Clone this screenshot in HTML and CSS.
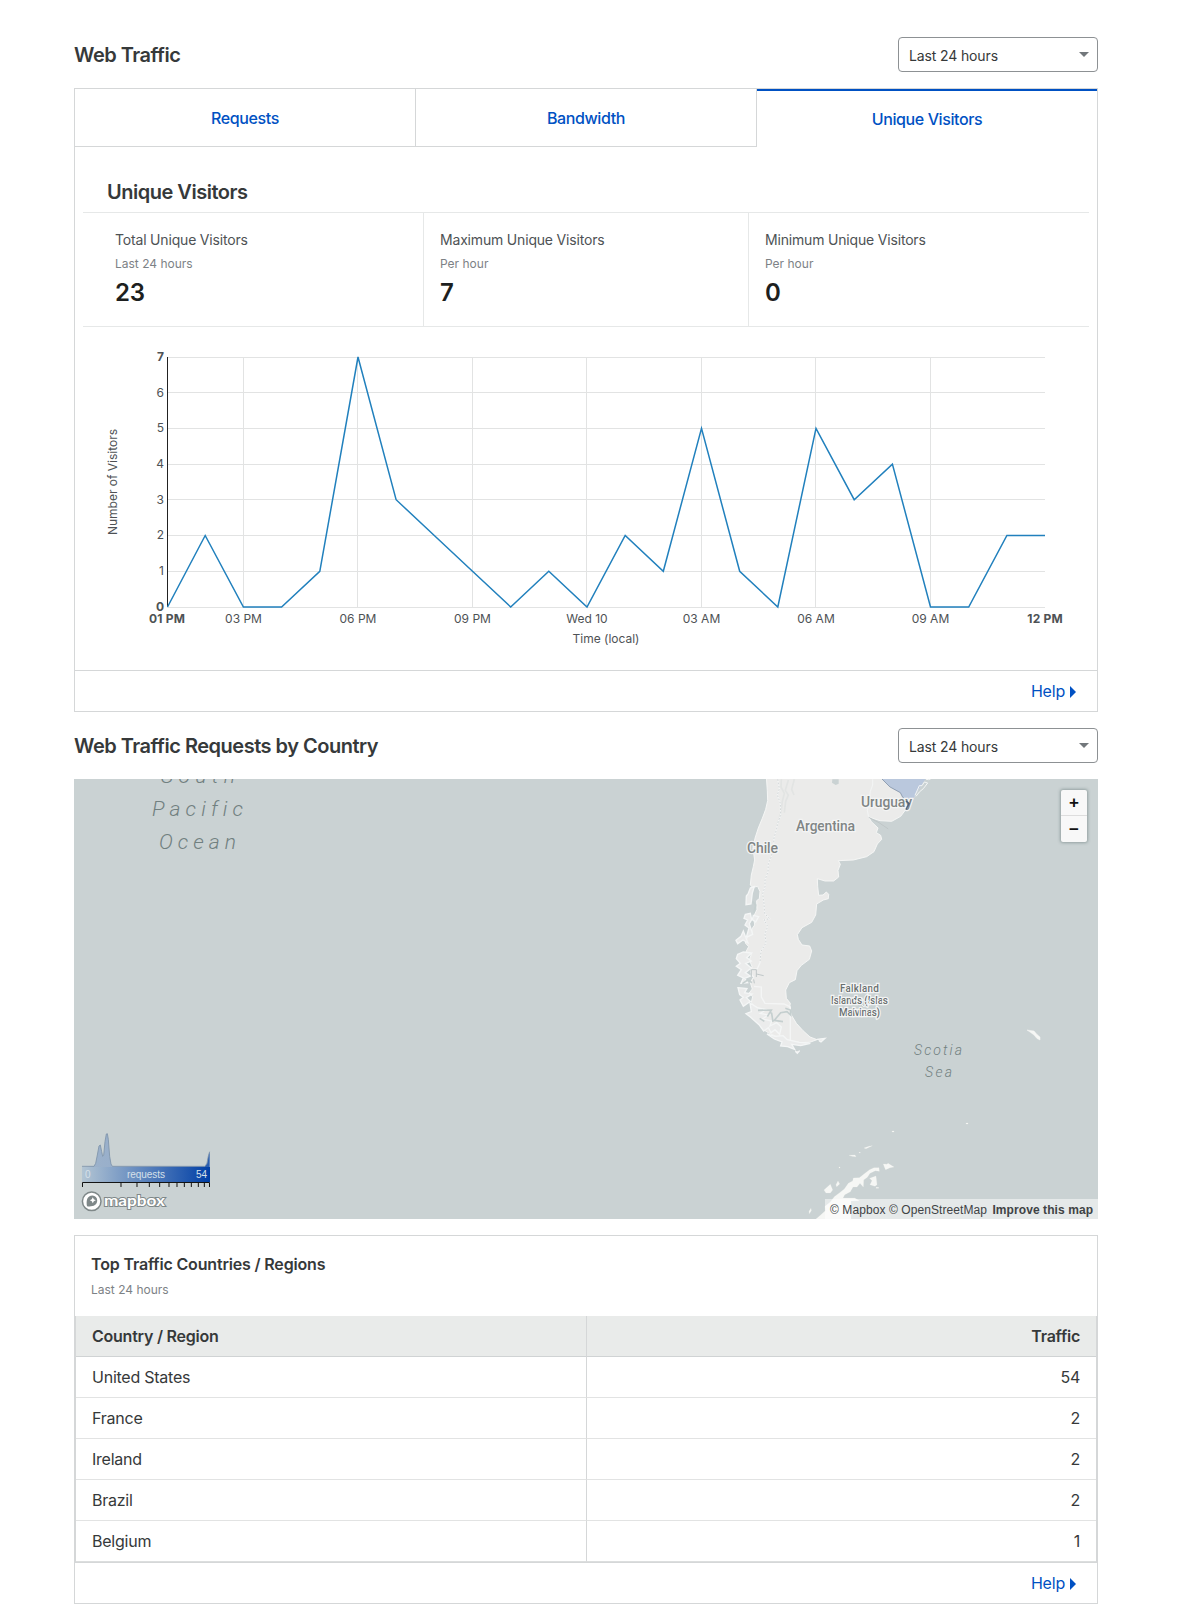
FILE: index.html
```html
<!DOCTYPE html>
<html lang="en">
<head>
<meta charset="utf-8">
<title>Web Traffic</title>
<link rel="stylesheet" href="styles.css">
</head>
<body>
<main class="page">
  <header class="section-head">
    <h2 class="section-title">Web Traffic</h2>
    <div class="select"><span>Last 24 hours</span><i class="caret"></i></div>
  </header>

  <section class="card">
    <nav class="tabs">
      <a class="tab">Requests</a>
      <a class="tab">Bandwidth</a>
      <a class="tab tab-active">Unique Visitors</a>
    </nav>
    <div class="panel">
      <h3 class="panel-title">Unique Visitors</h3>
      <div class="stats">
        <div class="stat"><div class="stat-label">Total Unique Visitors</div><div class="stat-sub">Last 24 hours</div><div class="stat-value">23</div></div>
        <div class="stat"><div class="stat-label">Maximum Unique Visitors</div><div class="stat-sub">Per hour</div><div class="stat-value">7</div></div>
        <div class="stat"><div class="stat-label">Minimum Unique Visitors</div><div class="stat-sub">Per hour</div><div class="stat-value">0</div></div>
      </div>
      <svg class="chart" width="1006" height="343" viewBox="83 327 1006 343">
        <path class="grid" d="M167 357.5H1045M167 392.5H1045M167 428.5H1045M167 464.5H1045M167 499.5H1045M167 535.5H1045M167 571.5H1045M167 607.5H1045M243.5 357V607M357.5 357V607M472.5 357V607M586.5 357V607M701.5 357V607M815.5 357V607M930.5 357V607"/>
        <path class="axis" d="M167.5 357V607"/>
        <polyline class="series" points="167.5,607 205.2,535.5 243.4,607 281.6,607 319.8,571.3 358,357 396.1,499.7 434.3,535.5 472.5,571.3 510.7,607 548.8,571.3 587,607 625.2,535.5 663.3,571.3 701.5,428.4 739.7,571.3 777.8,607 816,428.4 854.2,499.7 892.4,464.1 930.5,607 968.7,607 1006.9,535.5 1045,535.5"/>
        <g class="ticks ticks-y">
          <text x="164" y="361" class="bold">7</text><text x="164" y="397">6</text><text x="164" y="432">5</text><text x="164" y="468">4</text><text x="164" y="504">3</text><text x="164" y="539">2</text><text x="164" y="575">1</text><text x="164" y="611" class="bold">0</text>
        </g>
        <g class="ticks">
          <text x="167" y="623" class="bold" textLength="36">01 PM</text><text x="243.500" y="623">03 PM</text><text x="358" y="623">06 PM</text><text x="472.500" y="623">09 PM</text><text x="587" y="623">Wed 10</text><text x="701.500" y="623">03 AM</text><text x="816" y="623">06 AM</text><text x="930.500" y="623">09 AM</text><text x="1045" y="623" class="bold" textLength="35.500">12 PM</text>
          <text x="606" y="643">Time (local)</text>
          <text transform="translate(117 482) rotate(-90)">Number of Visitors</text>
        </g>
      </svg>
    </div>
    <footer class="card-foot"><a class="help">Help<i class="arrow"></i></a></footer>
  </section>

  <header class="section-head section-head-second">
    <h2 class="section-title">Web Traffic Requests by Country</h2>
    <div class="select"><span>Last 24 hours</span><i class="caret"></i></div>
  </header>

  <section class="map">
    <svg class="map-canvas" width="1024" height="440" viewBox="0 0 1024 440">
      <defs>
        <linearGradient id="scale" x1="0" x2="1" y1="0" y2="0"><stop offset="0" stop-color="#b3c5d3"/><stop offset="1" stop-color="#003fa6"/></linearGradient>
        <linearGradient id="scale-hist" gradientUnits="userSpaceOnUse" x1="36" x2="419" y1="0" y2="0"><stop offset="0" stop-color="#93abc8"/><stop offset=".3" stop-color="#8aa5c9"/><stop offset="1" stop-color="#003fa6"/></linearGradient>
      </defs>
      <!-- southern South America -->
      <g transform="translate(646 -9) scale(.33333)">
        <path class="land" d="M139 20L142 62 143 92 137 118 127 145 115 174 105 205 99 235 104 270 100 290 94 315 91 345 98 352 113 349 120 365 118 386 110 392 111 418 101 440 104 465 95 478 97 493 82 500 76 519 86 530 78 545 94 553 88 570 96 589 93 607 100 622 91 638 97 657 87 670 98 680 94 697 106 716 98 727 113 742 125 756 140 768 132 780 148 790 170 800 205 811 240 818 269 817 291 809 270 801 249 782 229 760 214 735 208 716 211 700 199 685 197 660 208 638 226 629 231 602 244 586 268 568 275 543 269 528 246 525 235 508 232 494 246 473 275 457 287 435 290 402 310 390 325 386 326 373 319 366 309 375 296 376 293 350 292 326 315 333 341 333 356 321 354 301 361 283 355 272 400 270 440 260 462 245 472 222 485 208 482 196 469 188 474 174 454 155 446 141 480 152 515 154 542 139 557 119 568 113 592 72 630 30V20Z"/>
        <path class="relief" d="M184 28L183 51 193 70 187 95 183 128 171 167 M205 30L196 61 205 75 197 94 193 128 M223 28L215 58 222 75"/>
        <path class="sea" d="M568 118L577 95 589 69 602 50 616 20H640V120Z"/>
        <path class="country-blue" d="M486 27L510 51 541 68 548 82 567 94 558 113 568 118 577 95 589 69 602 50 616 27Z"/>
        <path class="border-line dark" d="M486 27L510 51 541 68 548 82 567 94 558 115"/>
        <path class="shore" d="M585 76L598 47 606 47 613 36 623 39 610 56 599 65 588 79M618 28L626 29 632 27M458 28L458 45 451 64 446 100 442 122 446 141"/>
        <path class="lake" d="M337 28H356V41L347 45 336 38Z"/>
        <path class="border-halo" d="M173 28L178 56 172 75 181 100 182 137 174 156 169 180 162 204 160 228 154 260 145 281 144 305 135 330 135 350 128 371 132 401 134 431 149 446 132 450 143 469 135 492 138 519 123 544 120 578 112 596 94 599 94 615 102 621M102 649L124 651 124 681 135 700 192 702 211 711V810"/>
        <path class="border-line" d="M173 28L178 56 172 75 181 100 182 137 174 156 169 180 162 204 160 228 154 260 145 281 144 305 135 330 135 350 128 371 132 401 134 431 149 446 132 450 143 469 135 492 138 519 123 544 120 578"/>
        <path class="border-box" d="M101 628L103 640M94 621V599H109V621M109 612L131 617M446 142L477 158 505 177"/>
        <!-- Chilean archipelago -->
        <path class="isle" d="M91 354L103 350 97 369 93 402 78 404 79 378 85 370ZM76 433L91 430 95 449 88 461 98 493 79 502 87 474 75 465 83 450 72 445ZM100 436L116 440 107 456 97 449ZM48 511L63 499 70 483 77 502 84 519 69 510 53 521ZM53 553L70 546 95 549 80 563 94 573 77 580 94 594 76 608 91 618 74 625 83 638 63 640 70 624 53 616 64 599 49 589 61 580 49 566ZM54 653L81 656 74 668 96 672 79 683 91 694 70 709 60 690 70 682 59 674ZM90 699L112 713 138 719 121 730 145 735 127 747 155 753 150 768 170 758 184 771 179 793 165 779 153 788 145 773 131 783 117 764 101 750 92 742 78 731 94 725ZM141 792L165 799 189 797 202 809 238 817 271 820 242 827 215 823 224 838 203 830 182 828 186 816 163 807ZM239 842L232 850 226 844M291 808L315 805 303 816 297 812"/>
        <path class="fjord" d="M98 395L107 405 102 428M67 641L83 630 96 638M114 721L154 720 142 740M148 726L155 730 159 756M196 715L211 720 212 735 201 725 182 728 163 751 189 755M119 745L133 754"/>
      </g>
      <!-- Antarctic peninsula and Scotia Sea islands -->
      <g class="ice" transform="translate(726 261) scale(.33333)">
        <path d="M48 537L62 525 76 512 75 499 91 486 103 470 119 458 133 447 145 430 158 423 160 414 178 413 196 399 209 389 222 383 237 383 238 394 226 392 210 400 202 412 191 420 190 441 180 430 171 441 159 441 151 455 134 464 129 474H164L178 482 153 483V537ZM72 450L91 433 98 450 91 459 78 459ZM108 434L114 423 119 432 110 440ZM209 415L228 408 231 434 225 439 210 434 216 422ZM250 372L261 373 264 370 282 381 270 383 257 389 254 383ZM147 346L165 345 168 350 156 349ZM192 324L207 319 217 317 198 326ZM177 337H181V339H177ZM276 273H282V276H276ZM498 249H504V252H498ZM117 381H120V384H117ZM27 514L33 505 34 512 28 521ZM228 442H236V445H228Z"/>
      </g>
      <path class="ice" d="M953 251L956 251.500 960 252 963 255.500 966 258V261L963 259.500 960 256 956 253Z"/>

      <g class="sea-label big">
        <text x="87" y="4" textLength="74">South</text>
        <text x="78" y="37" textLength="91">Pacific</text>
        <text x="85" y="69.500" textLength="77">Ocean</text>
      </g>
      <g class="sea-label">
        <text x="840" y="276" textLength="48">Scotia</text>
        <text x="851" y="298" textLength="27">Sea</text>
      </g>
      <g class="place">
        <text x="787" y="28" textLength="51">Uruguay</text>
        <text x="722" y="52" textLength="59">Argentina</text>
        <text x="673" y="74" textLength="31">Chile</text>
      </g>
      <path class="border-line dark" d="M832 22l3 2.500-3 6"/>
      <g class="place small">
        <text x="766" y="213" textLength="39">Falkland</text>
        <text x="757" y="225" textLength="57">Islands (Islas</text>
        <text x="765" y="237" textLength="41">Malvinas)</text>
      </g>
      <path class="falkland" d="M776 220l3-1 2 3 3-1M786 222l2-3 3 4 3-2 2 3-4 1-2 3-3-3"/>

      <!-- request density scale -->
      <g transform="translate(-4 341) scale(.33333)">
        <path d="M36 141L72 139 77 130 82 105 87 78 91 75 95 95 98 109 101 106 105 65 109 42 112 41 115 58 119 109 123 132 127 139H405L411 130 415 108 419 95V141Z" fill="url(#scale-hist)" fill-opacity=".8"/>
        <path class="density" d="M36 139H72L77 130 82 105 87 78 91 75 95 95 98 109 101 106 105 65 109 42 112 41 115 58 119 109 123 132 127 139H405L411 130 415 108 419 95"/>
        <rect x="36" y="141" width="384" height="45" fill="url(#scale)"/>
        <path class="scale-axis" d="M37.500 201V187.500H418.500V201M153 187V201M201 187V201M238 187V201M269 187V201M297 187V201M321 187V201M343 187V201M364 187V201M385 187V201M403 187V201"/>
      </g>
      <g class="scale-text">
        <text x="11" y="399">0</text><text x="72" y="399" text-anchor="middle" textLength="38">requests</text><text x="133" y="399" text-anchor="end">54</text>
      </g>
      <!-- mapbox mark -->
      <g>
        <circle cx="17.700" cy="422.300" r="9.300" fill="#fff" stroke="#7f8889" stroke-width="1.500"/>
        <path d="M13 427.200C12 422 13 416.600 18.500 416.600A4.800 4.800 0 0 1 23.200 421.500C23.200 426.500 18 428 13 427.200Z" fill="#7f8889"/>
        <path d="M18.800 418.200l1 2 2 1-2 1-1 2-1-2-2-1 2-1z" fill="#fff"/>
        <text class="brand" x="30" y="427" textLength="61" lengthAdjust="spacingAndGlyphs">mapbox</text>
      </g>
    </svg>
    <div class="zoom"><span class="zoom-button">+</span><span class="zoom-button">−</span></div>
    <div class="attribution"><span>© Mapbox</span> <span>© OpenStreetMap</span> <b>Improve this map</b></div>
  </section>

  <section class="card countries">
    <div class="countries-head">
      <h3 class="countries-title">Top Traffic Countries / Regions</h3>
      <div class="countries-sub">Last 24 hours</div>
    </div>
    <table class="table">
      <thead><tr><th>Country / Region</th><th>Traffic</th></tr></thead>
      <tbody>
        <tr><td>United States</td><td>54</td></tr>
        <tr><td>France</td><td>2</td></tr>
        <tr><td>Ireland</td><td>2</td></tr>
        <tr><td>Brazil</td><td>2</td></tr>
        <tr><td>Belgium</td><td>1</td></tr>
      </tbody>
    </table>
    <footer class="card-foot"><a class="help">Help<i class="arrow"></i></a></footer>
  </section>
</main>
</body>
</html>
```
FILE: styles.css
```css
* { box-sizing: border-box; }
body { margin: 0; background: #fff; color: #36393a; font: 16px/24px Inter, "Liberation Sans", sans-serif; }
h2, h3 { margin: 0; }
.page { width: 1024px; margin: 0 0 0 74px; padding-top: 37px; }
.section-head { display: flex; justify-content: space-between; align-items: center; height: 35px; margin-bottom: 16px; }
.section-head-second { margin-top: 16px; }
.section-title { padding-top: 1px; font-size: 20px; line-height: 30px; font-weight: 600; letter-spacing: -.49px; }
.select { display: flex; align-items: center; justify-content: space-between; width: 200px; height: 35px; padding: 3px 8px 0 10px; border: 1px solid #8d9194; border-radius: 4px; font-size: 14px; line-height: 20px; letter-spacing: -.13px; }
.caret { border: 5px solid transparent; border-top-color: #72777b; border-bottom: 0; margin-top: -4px; }

.card { border: 1px solid #d5d7d8; }
.tabs { display: grid; grid-template-columns: 341px 341px 1fr; height: 58px; }
.tab { display: flex; align-items: center; justify-content: center; border-right: 1px solid #d5d7d8; border-bottom: 1px solid #d5d7d8; color: #0051c3; font-weight: 500; letter-spacing: -.4px; }
.tab-active { border: 0; border-top: 2px solid #0051c3; }
.panel { padding: 28px 8px 0; }
.panel-title { padding-left: 24px; height: 37px; font-size: 20px; line-height: 35px; font-weight: 600; letter-spacing: -.49px; }
.stats { display: grid; grid-template-columns: 325px 325px 1fr; height: 115px; padding-left: 16px; border: solid #e6e8e8; border-width: 1px 0; }
.stat { padding: 16px 16px 0; border-right: 1px solid #e6e8e8; }
.stat:last-child { border: 0; }
.stat-label { font-size: 14px; line-height: 22px; color: #4e5255; letter-spacing: -.18px; }
.stat-sub { padding-top: 1px; font-size: 12px; line-height: 24px; color: #7d8286; }
.stat-value { font-size: 24px; line-height: 34px; font-weight: 600; color: #1d1f20; letter-spacing: -.3px; }
.chart { display: block; }
.grid { fill: none; stroke: #e2e3e3; }
.axis { stroke: #222; }
.series { fill: none; stroke: #2180bd; stroke-width: 1.5; }
.ticks { font-size: 12px; fill: #4e5255; text-anchor: middle; }
.ticks-y { text-anchor: end; }
.bold { font-weight: 700; }
.card-foot { display: flex; justify-content: flex-end; align-items: center; height: 41px; padding-right: 21px; border-top: 1px solid #d5d7d8; }
.help { display: flex; align-items: center; gap: 5px; color: #0051c3; letter-spacing: -.2px; }
.arrow { border: 6px solid transparent; border-left: 6px solid #0051c3; border-right: 0; margin-top: 1px; }

.map { position: relative; height: 440px; overflow: hidden; background: #cad2d3; }
.map-canvas { display: block; }
.land { fill: #ebebea; stroke: #f5f6f5; stroke-width: 3; }
.relief { fill: none; stroke: #e2e4e3; stroke-width: 5; }
.sea { fill: #cad2d3; }
.country-blue { fill: #bac8dd; }
.border-halo { fill: none; stroke: #f4f5f5; stroke-width: 4; }
.border-line { fill: none; stroke: #c3c9ca; stroke-width: 2; stroke-dasharray: 5 5; }
.border-box { fill: none; stroke: #bfc6c7; stroke-width: 3; }
.dark { stroke: #4f6580; stroke-width: 1.5; stroke-dasharray: none; }
.shore { fill: none; stroke: #f3f5f5; stroke-width: 3; }
.lake { fill: #cad2d3; }
.isle { fill: #ebecec; stroke: #f4f6f6; stroke-width: 4; }
.fjord { fill: none; stroke: #c5cfcf; stroke-width: 5; }
.ice { fill: #f6f7f5; stroke: #f6f7f5; stroke-width: .5; }
.falkland { fill: none; stroke: #eef0f0; stroke-width: 1; }
.sea-label { font: italic 300 14px Roboto, sans-serif; fill: #718080; font-variant-ligatures: none; }
.big { font-size: 21px; }
.place { font: 500 14px Roboto, sans-serif; fill: #808585; stroke: #f3f4f4; stroke-width: 2.5px; paint-order: stroke; }
.small { font-size: 10px; fill: #6a7070; }
.density { fill: none; stroke: #7d93aa; stroke-width: 2.5; }
.scale-axis { fill: none; stroke: #111; stroke-width: 3; }
.scale-text { font: 10px "Liberation Sans", sans-serif; fill: #d6e0e9; }
.brand { font: 700 16px Lato, sans-serif; fill: #fff; stroke: #7f8889; stroke-width: 2px; paint-order: stroke; }
.zoom { position: absolute; top: 11px; right: 11px; width: 26px; height: 52px; border-radius: 2px; background: #f8f8f8; box-shadow: 0 0 3px 1px rgba(70, 90, 90, .4); }
.zoom-button { display: flex; align-items: center; justify-content: center; height: 26px; font: 700 17px "Liberation Sans", sans-serif; color: #111; }
.zoom-button:first-child { border-bottom: 1px solid #ddd; }
.zoom-button:last-child { padding-top: 2px; }
.attribution { position: absolute; right: 0; bottom: 0; width: 273px; height: 20px; padding-left: 5px; background: rgba(255, 255, 255, .5); color: #404345; font: 12px/22px "Liberation Sans", sans-serif; letter-spacing: .08px; white-space: nowrap; }
.attribution b { margin-left: 2px; }

.countries { margin-top: 16px; }
.countries-head { height: 80px; padding: 16px 16px 0; }
.countries-title { font-size: 16px; line-height: 25px; font-weight: 600; letter-spacing: -.17px; }
.countries-sub { font-size: 12px; line-height: 26px; color: #7d8286; }
.table { width: 100%; border-collapse: separate; border-spacing: 0; table-layout: fixed; border: solid #d5d7d8; border-width: 0 1px; }
.table th, .table td { height: 41px; padding: 0 16px; border-bottom: 1px solid #e2e3e3; text-align: left; line-height: 24px; letter-spacing: -.24px; }
.table th { background: #e9ebea; border-bottom-color: #d0d3d4; font-weight: 600; }
.table tr > :first-child { border-right: 1px solid #d5d7d8; width: 511px; }
.table tr > :last-child { text-align: right; }
.table tr:last-child td { border-bottom-color: #dcdede; }
```
